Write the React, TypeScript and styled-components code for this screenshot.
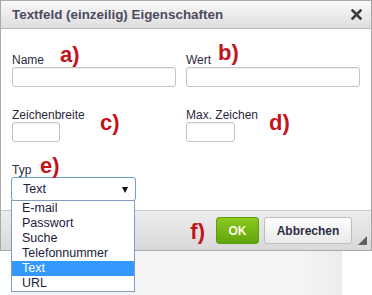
import React from 'react';
import styled, { createGlobalStyle } from 'styled-components';

const GlobalStyle = createGlobalStyle`
  html, body {
    margin: 0;
    padding: 0;
    background: #fff;
  }
  body {
    font-family: "Liberation Sans", Arial, sans-serif;
    width: 372px;
    height: 295px;
    overflow: hidden;
  }
`;

const Dialog = styled.div`
  width: 372px;
  box-sizing: border-box;
  border: 1px solid #a9a9a9;
  background: #fff;
`;

const TitleBar = styled.div`
  height: 28px;
  box-sizing: border-box;
  border-bottom: 1px solid #b9b9b9;
  background: linear-gradient(#f9f9f9, #dedede);
  display: flex;
  align-items: center;
  justify-content: space-between;
  padding: 0 9px 0 11px;
`;

const Title = styled.span`
  font-size: 13.4px;
  font-weight: bold;
  color: #4c4c5e;
  line-height: 28px;
`;

const CloseButton = styled.span`
  display: flex;
  width: 11px;
  height: 11px;
  margin-top: -1px;
`;

const Body = styled.div`
  height: 181px;
  box-sizing: border-box;
  padding: 24px 0 0 11px;
  display: grid;
  grid-template-columns: 164px 174px;
  column-gap: 10px;
  row-gap: 21px;
  align-content: start;
`;

const Field = styled.div`
  position: relative;
  display: flex;
  flex-direction: column;
  align-items: flex-start;
`;

const Label = styled.label`
  font-size: 12px;
  line-height: 14px;
  color: #2e2a3c;
`;

const Input = styled.div<{ $width: number }>`
  width: ${(p) => p.$width}px;
  height: 20px;
  box-sizing: border-box;
  border: 1px solid #c4c4c4;
  border-radius: 3px;
  box-shadow: inset 0 1px 1px rgba(0, 0, 0, 0.06);
  background: #fff;
`;

const Select = styled.div`
  position: relative;
  width: 125px;
  height: 24px;
  margin-left: -1px;
  box-sizing: border-box;
  border: 1px solid #6c9fd6;
  border-radius: 3px;
  display: flex;
  align-items: center;
  justify-content: space-between;
  padding: 0 7px 0 11px;
  font-size: 12.5px;
  color: #1e1b3a;
`;

const Arrow = styled.span`
  width: 0;
  height: 0;
  border-left: 3.5px solid transparent;
  border-right: 3.5px solid transparent;
  border-top: 6px solid #111;
  margin-top: 1px;
`;

const OptionList = styled.ul`
  position: absolute;
  left: -1px;
  top: 22px;
  z-index: 5;
  width: 124px;
  margin: 0;
  padding: 0;
  list-style: none;
  box-sizing: border-box;
  border: 1px solid #7f9dc0;
  background: #fff;
`;

const Option = styled.li<{ $active?: boolean }>`
  height: 15px;
  line-height: 15px;
  padding-left: 10px;
  font-size: 12.5px;
  color: ${(p) => (p.$active ? '#fff' : '#1e1b3a')};
  background: ${(p) => (p.$active ? '#3399ff' : '#fff')};
`;

const Mark = styled.span<{ $x?: number; $y?: number }>`
  position: absolute;
  left: ${(p) => p.$x ?? 0}px;
  top: ${(p) => p.$y ?? 0}px;
  font-size: 22px;
  line-height: 22px;
  font-weight: bold;
  color: #c3141c;
`;

const Footer = styled.div`
  position: relative;
  height: 40px;
  box-sizing: border-box;
  border-top: 1px solid #c9c9c9;
  background: linear-gradient(#ececec, #d9d9d9);
  display: flex;
  align-items: center;
  justify-content: flex-end;
  gap: 5px;
  padding-right: 19px;
`;

const FooterMark = styled.span`
  font-size: 22px;
  line-height: 22px;
  font-weight: bold;
  color: #c3141c;
  margin-right: 6px;
  margin-top: 2px;
`;

const Button = styled.button<{ $primary?: boolean }>`
  height: 27px;
  box-sizing: border-box;
  border-radius: 3px;
  font-family: "Liberation Sans", Arial, sans-serif;
  font-size: 12px;
  font-weight: bold;
  padding: 0;
  width: ${(p) => (p.$primary ? 43 : 88)}px;
  color: ${(p) => (p.$primary ? '#fbfbe6' : '#2f2d45')};
  border: 1px solid ${(p) => (p.$primary ? '#5e9c12' : '#bdbdbd')};
  background: ${(p) =>
    p.$primary
      ? 'linear-gradient(#8bc91f, #62a40d)'
      : 'linear-gradient(#fdfdfd, #eaeaea)'};
`;

const Grip = styled.span`
  position: absolute;
  right: 4px;
  bottom: 5px;
  width: 0;
  height: 0;
  border-left: 9px solid transparent;
  border-bottom: 9px solid #5f5f5f;
`;

const Backdrop = styled.div`
  display: flex;
  height: 44px;
`;

const Spacer = styled.div`
  width: 11px;
`;

const Panel = styled.div`
  width: 331px;
  background: linear-gradient(to right, #f4f4f4 88%, #ececec);
`;

const options = ['E-mail', 'Passwort', 'Suche', 'Telefonnummer', 'Text', 'URL'];

function App() {
  return (
    <>
      <GlobalStyle />
      <Dialog>
        <TitleBar>
          <Title>Textfeld (einzeilig) Eigenschaften</Title>
          <CloseButton>
            <svg width="11" height="11" viewBox="0 0 11 11">
              <path d="M1.5 1.5 L9.5 9.5 M9.5 1.5 L1.5 9.5" stroke="#3b3b3b" strokeWidth="2.6" strokeLinecap="square" />
            </svg>
          </CloseButton>
        </TitleBar>
        <Body>
          <Field>
            <Label>Name</Label>
            <Input $width={164} />
            <Mark $x={48} $y={-9}>a)</Mark>
          </Field>
          <Field>
            <Label>Wert</Label>
            <Input $width={174} />
            <Mark $x={32} $y={-11}>b)</Mark>
          </Field>
          <Field>
            <Label>Zeichenbreite</Label>
            <Input $width={48} />
            <Mark $x={88} $y={4}>c)</Mark>
          </Field>
          <Field>
            <Label>Max. Zeichen</Label>
            <Input $width={49} />
            <Mark $x={83} $y={4}>d)</Mark>
          </Field>
          <Field>
            <Label>Typ</Label>
            <Select>
              <span>Text</span>
              <Arrow />
              <OptionList>
                {options.map((o) => (
                  <Option key={o} $active={o === 'Text'}>
                    {o}
                  </Option>
                ))}
              </OptionList>
            </Select>
            <Mark $x={28} $y={-8}>e)</Mark>
          </Field>
        </Body>
        <Footer>
          <FooterMark>f)</FooterMark>
          <Button $primary>OK</Button>
          <Button>Abbrechen</Button>
          <Grip />
        </Footer>
      </Dialog>
      <Backdrop>
        <Spacer />
        <Panel />
      </Backdrop>
    </>
  );
}

export default App;
